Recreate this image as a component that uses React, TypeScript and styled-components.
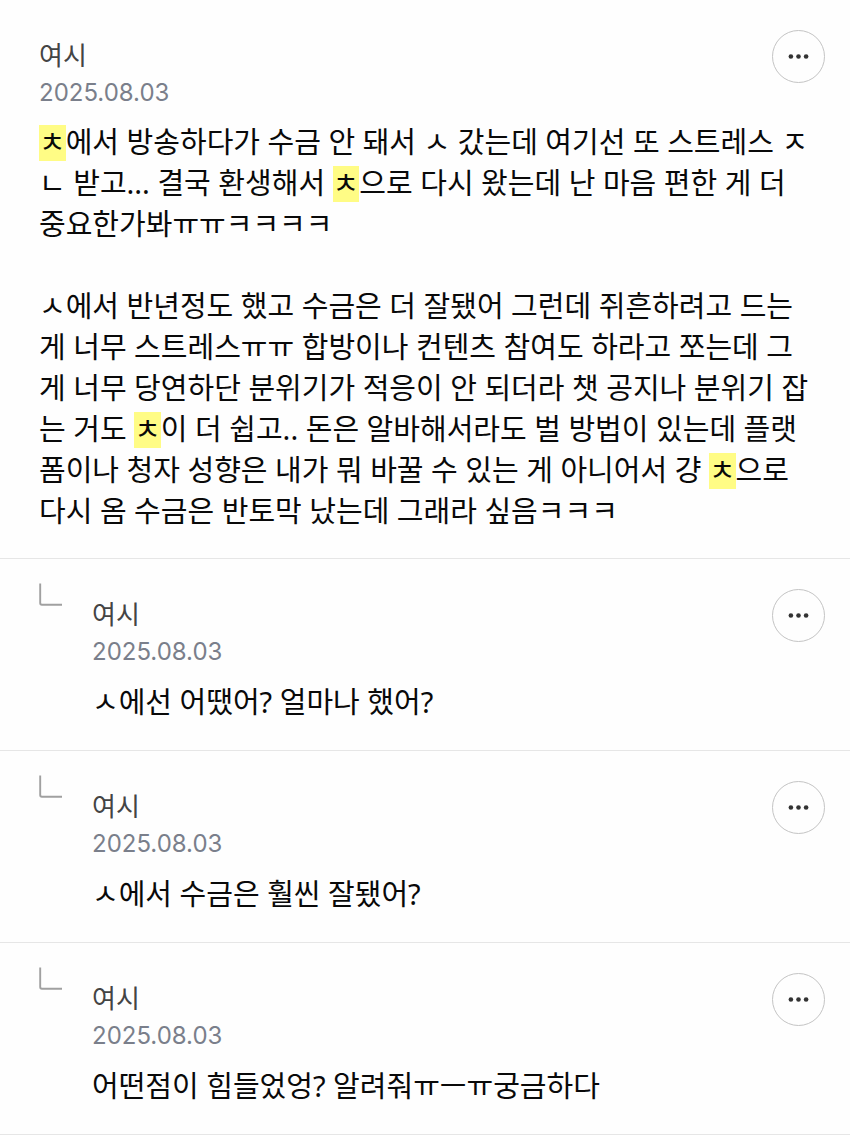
import React from "react";
import styled, { createGlobalStyle } from "styled-components";

const GlobalStyle = createGlobalStyle`
  *, *::before, *::after { box-sizing: border-box; }
  body {
    margin: 0;
    background: #fefefe;
    color: #090909;
    font-family: "Noto Sans", "Noto Sans CJK KR", sans-serif;
  }
`;

const CommentList = styled.main`
  display: flex;
  flex-direction: column;
`;

const Comment = styled.article<{ $reply?: boolean }>`
  display: flex;
  align-items: flex-start;
  padding: ${(p) => (p.$reply ? "24px 39px 28px" : "30px 39px 27px")};
  border-bottom: 1px solid #e6e6e6;
`;

const ReplyMark = styled.svg`
  flex: none;
  width: 24px;
  height: 24px;
  margin-right: 29px;
`;

const Content = styled.div<{ $reply?: boolean }>`
  flex: 1;
  min-width: 0;
  padding-top: ${(p) => (p.$reply ? "6px" : "0")};
`;

const Header = styled.header`
  display: flex;
  justify-content: space-between;
  align-items: flex-start;
  margin-right: -14px;
`;

const Meta = styled.div`
  padding-top: 7px;
`;

const Author = styled.div`
  color: #444;
  font-size: 26px;
  line-height: 36px;
`;

const PostedAt = styled.time`
  display: block;
  color: #7a7f8b;
  font-family: Inter, sans-serif;
  font-size: 24px;
  line-height: 40px;
`;

const MoreButton = styled.button`
  display: flex;
  align-items: center;
  justify-content: center;
  width: 53px;
  height: 53px;
  padding: 0;
  border: 1px solid #c4c4c4;
  border-radius: 50%;
  background: #fefefe;
  cursor: pointer;
`;

const Text = styled.p<{ $reply?: boolean }>`
  margin: ${(p) => (p.$reply ? "9px" : "8px")} 0 0;
  font-size: 29px;
  line-height: 41px;
`;

const Highlight = styled.mark`
  padding: 1px 0;
  background: #fffc85;
  color: inherit;
  font-family: Roboto, "Noto Sans CJK KR", sans-serif;
  line-height: 1;
`;

type Props = { reply?: boolean; children: React.ReactNode };

function Entry({ reply, children }: Props) {
  return (
    <Comment $reply={reply}>
      {reply && (
        <ReplyMark viewBox="0 0 24 24" aria-hidden="true">
          <path d="M1.2 0.5V20Q1.2 21.7 2.9 21.7H23" fill="none" stroke="#a0a0a0" strokeWidth="1.9" />
        </ReplyMark>
      )}
      <Content $reply={reply}>
        <Header>
          <Meta>
            <Author>여시</Author>
            <PostedAt dateTime="2025-08-03">2025.08.03</PostedAt>
          </Meta>
          <MoreButton type="button" aria-label="더보기">
            <svg width="23" height="7" viewBox="0 0 23 7" fill="#333" aria-hidden="true">
              <circle cx="3.9" cy="3.5" r="2.3" />
              <circle cx="11.5" cy="3.5" r="2.3" />
              <circle cx="19.1" cy="3.5" r="2.3" />
            </svg>
          </MoreButton>
        </Header>
        <Text $reply={reply}>{children}</Text>
      </Content>
    </Comment>
  );
}

const Hit = () => <Highlight>ㅊ</Highlight>;

export default function App() {
  return (
    <>
      <GlobalStyle />
      <CommentList>
        <Entry>
          <Hit />에서 방송하다가 수금 안 돼서 ㅅ 갔는데 여기선 또 스트레스 ㅈ<br />
          ㄴ 받고... 결국 환생해서 <Hit />으로 다시 왔는데 난 마음 편한 게 더<br />
          중요한가봐ㅠㅠㅋㅋㅋㅋ<br />
          <br />
          ㅅ에서 반년정도 했고 수금은 더 잘됐어 그런데 쥐흔하려고 드는<br />
          게 너무 스트레스ㅠㅠ 합방이나 컨텐츠 참여도 하라고 쪼는데 그<br />
          게 너무 당연하단 분위기가 적응이 안 되더라 챗 공지나 분위기 잡<br />
          는 거도 <Hit />이 더 쉽고.. 돈은 알바해서라도 벌 방법이 있는데 플랫<br />
          폼이나 청자 성향은 내가 뭐 바꿀 수 있는 게 아니어서 걍 <Hit />으로<br />
          다시 옴 수금은 반토막 났는데 그래라 싶음ㅋㅋㅋ
        </Entry>
        <Entry reply>ㅅ에선 어땠어? 얼마나 했어?</Entry>
        <Entry reply>ㅅ에서 수금은 훨씬 잘됐어?</Entry>
        <Entry reply>어떤점이 힘들었엉? 알려줘ㅠㅡㅠ궁금하다</Entry>
      </CommentList>
    </>
  );
}
